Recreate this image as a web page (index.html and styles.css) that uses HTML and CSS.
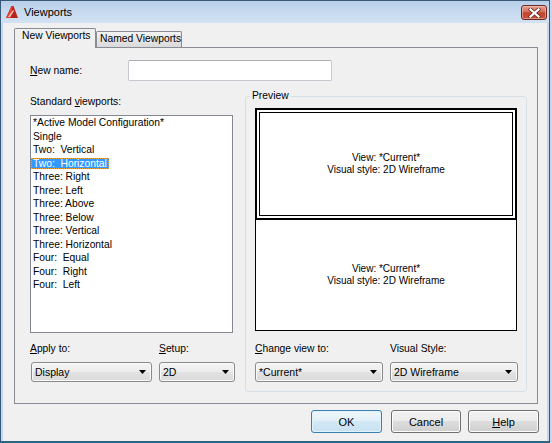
FILE: index.html
```html
<!DOCTYPE html>
<html>
<head>
<meta charset="utf-8">
<title>Viewports</title>
<link rel="stylesheet" href="styles.css">
</head>
<body>
<div class="window">
  <div class="titlebar">
    <svg class="app-icon" width="14" height="14" viewBox="0 0 14 14">
      <polygon points="1,13 6.5,1 8.5,1 13,13" fill="#b5231a"/>
      <polygon points="1,13 6.5,1 7.5,1 6,13" fill="#e2412f"/>
      <polygon points="3,12 8,5 9,6 5,12" fill="#f4c7bf"/>
    </svg>
    <span class="title">Viewports</span>
    <div class="close-btn">
      <svg width="13" height="10" viewBox="0 0 13 10">
        <path d="M2.5 1.5L10.5 8.5M10.5 1.5L2.5 8.5" stroke="#6d3128" stroke-width="3.8" stroke-linecap="square"/>
        <path d="M2.5 1.5L10.5 8.5M10.5 1.5L2.5 8.5" stroke="#ffffff" stroke-width="2.2" stroke-linecap="square"/>
      </svg>
    </div>
  </div>
  <div class="client">
    <div class="tabs">
      <div class="tab active">New Viewports</div>
      <div class="tab">Named Viewports</div>
    </div>
    <div class="panel">
      <div class="name-row">
        <div class="name-label"><u>N</u>ew name:</div>
        <div class="textbox"></div>
      </div>
      <div class="main-grid">
        <div class="left-col">
          <div class="label">Standard <u>v</u>iewports:</div>
          <div class="listbox">
            <div class="item"><span>*Active Model Configuration*</span></div>
            <div class="item"><span>Single</span></div>
            <div class="item"><span>Two:  Vertical</span></div>
            <div class="item"><span class="selected">Two:  Horizontal</span></div>
            <div class="item"><span>Three: Right</span></div>
            <div class="item"><span>Three: Left</span></div>
            <div class="item"><span>Three: Above</span></div>
            <div class="item"><span>Three: Below</span></div>
            <div class="item"><span>Three: Vertical</span></div>
            <div class="item"><span>Three: Horizontal</span></div>
            <div class="item"><span>Four:  Equal</span></div>
            <div class="item"><span>Four:  Right</span></div>
            <div class="item"><span>Four:  Left</span></div>
          </div>
          <div class="combo-row">
            <div class="field f-apply">
              <div class="label"><u>A</u>pply to:</div>
              <div class="combo"><span>Display</span><svg class="arrow" width="7" height="4" viewBox="0 0 7 4"><path d="M0 0H7L3.5 4Z"/></svg></div>
            </div>
            <div class="field f-setup">
              <div class="label"><u>S</u>etup:</div>
              <div class="combo"><span>2D</span><svg class="arrow" width="7" height="4" viewBox="0 0 7 4"><path d="M0 0H7L3.5 4Z"/></svg></div>
            </div>
          </div>
        </div>
        <fieldset class="preview-group">
          <legend>Preview</legend>
          <div class="preview-body">
            <div class="preview">
              <div class="pane pane-top">
                <div class="pane-inner">
                  <span>View: *Current*</span>
                  <span>Visual style: 2D Wireframe</span>
                </div>
              </div>
              <div class="pane pane-bottom">
                <span>View: *Current*</span>
                <span>Visual style: 2D Wireframe</span>
              </div>
            </div>
            <div class="combo-row">
              <div class="field f-view">
                <div class="label"><u>C</u>hange view to:</div>
                <div class="combo"><span>*Current*</span><svg class="arrow" width="7" height="4" viewBox="0 0 7 4"><path d="M0 0H7L3.5 4Z"/></svg></div>
              </div>
              <div class="field f-style">
                <div class="label">Visual Style:</div>
                <div class="combo"><span>2D Wireframe</span><svg class="arrow" width="7" height="4" viewBox="0 0 7 4"><path d="M0 0H7L3.5 4Z"/></svg></div>
              </div>
            </div>
          </div>
        </fieldset>
      </div>
    </div>
    <div class="buttons">
      <div class="btn default">OK</div>
      <div class="btn btn-cancel">Cancel</div>
      <div class="btn btn-help"><u>H</u>elp</div>
    </div>
  </div>
</div>
</body>
</html>
```

FILE: styles.css
```css
* { box-sizing: border-box; }
html, body { margin: 0; padding: 0; }
body {
  width: 552px;
  height: 443px;
  overflow: hidden;
  background: #c4d7ec;
  font-family: "Liberation Sans", Arial, sans-serif;
  font-size: 10.3px;
  color: #000;
}
.window {
  width: 550px;
  height: 443px;
  border: 1px solid #3a5877;
  border-bottom: 2px solid #2f6583;
  background: #c4d7ec;
  display: flex;
  flex-direction: column;
}
.titlebar {
  height: 22px;
  flex: none;
  display: flex;
  align-items: center;
  padding: 0 2px 0 4px;
  background: linear-gradient(#b7cee8, #c6d9ef 45%, #d2e2f3);
}
.app-icon { flex: none; margin-right: 5px; }
.title { flex: 1; font-size: 11px; line-height: 13px; color: #000; }
.close-btn {
  flex: none;
  width: 26px;
  height: 15px;
  margin-top: 1px;
  border: 1px solid #6b2a22;
  border-radius: 3px;
  background: linear-gradient(#e3a091, #d3705c 45%, #c4432d 52%, #c9553d);
  box-shadow: inset 0 0 0 1px rgba(255, 220, 210, 0.45);
  display: flex;
  align-items: center;
  justify-content: center;
}
.client {
  flex: 1;
  margin: 0 2px;
  background: #f0f0f0;
  display: flex;
  flex-direction: column;
}
.tabs {
  flex: none;
  height: 19px;
  margin: 5px 0 0 11px;
  display: flex;
  align-items: flex-end;
}
.tab {
  height: 16px;
  border: 1px solid #898c95;
  border-bottom: none;
  border-radius: 2px 2px 0 0;
  background: linear-gradient(#f3f3f3, #e6e6e6 50%, #dadada);
  padding: 0 0 0 3px;
  line-height: 13px;
  width: 86px;
  white-space: nowrap;
}
.tab.active {
  position: relative;
  z-index: 1;
  width: 82px;
  height: 20px;
  margin-bottom: -1px;
  padding-left: 7px;
  line-height: 14px;
  background: #f0f0f0;
}
.panel {
  flex: none;
  width: 524px;
  height: 357px;
  margin-left: 11px;
  border: 1px solid #898c95;
  background: #f0f0f0;
  padding-left: 15px;
}
.name-row {
  display: flex;
  align-items: center;
  margin-top: 12px;
  height: 21px;
}
.name-label { width: 98px; line-height: 12px; }
.textbox {
  width: 204px;
  height: 21px;
  background: #fff;
  border: 1px solid #c5c8ce;
  border-top-color: #abadb3;
  border-radius: 2px;
}
.main-grid {
  display: grid;
  grid-template-columns: 203px 282px;
  column-gap: 12px;
  align-items: start;
  margin-top: 9px;
}
.left-col {
  padding-top: 6px;
  display: flex;
  flex-direction: column;
}
.label { line-height: 12px; white-space: nowrap; }
.listbox {
  margin-top: 7px;
  height: 218px;
  background: #fff;
  border: 1px solid #828790;
}
.item { line-height: 13.5px; height: 13.5px; white-space: pre; }
.item span { padding: 0 2px; }
.item .selected {
  background: #3399ff;
  color: #fff;
  outline: 1px dotted #e8a23a;
  outline-offset: -1px;
}
.combo-row { display: flex; margin-top: 10px; }
.field { display: flex; flex-direction: column; flex: none; }
.combo {
  margin-top: 7px;
  height: 20px;
  border: 1px solid #8a8a8a;
  border-radius: 3px;
  background: linear-gradient(#f4f4f4, #ececec 50%, #e2e2e2 50%, #dadada);
  box-shadow: inset 0 0 0 1px #fbfbfb;
  display: flex;
  align-items: center;
  padding: 0 5px 0 3px;
  font-size: 10.5px;
  white-space: nowrap;
}
.combo span { flex: 1; }
.arrow { flex: none; fill: #000; }
.f-apply { width: 122px; }
.f-apply .combo { margin-left: 1px; width: 121px; }
.f-setup { margin-left: 7px; width: 76px; }
.preview-group {
  margin: 0;
  padding: 0;
  min-width: 0;
  width: 282px;
  border: 1px solid #d5dfe5;
  border-radius: 3px;
}
.preview-group legend {
  margin-left: 4px;
  padding: 0 2px;
  line-height: 12px;
  font-size: 10.3px;
}
.preview-body { padding: 6px 9px 9px 9px; }
.preview {
  width: 262px;
  height: 223px;
  display: flex;
  flex-direction: column;
  background: #fff;
}
.pane {
  display: flex;
  flex-direction: column;
  align-items: center;
  justify-content: center;
  font-size: 10px;
  line-height: 12px;
  text-align: center;
}
.pane-top {
  height: 112px;
  border: 2px solid #000;
  padding: 2px;
  align-items: stretch;
}
.pane-inner {
  flex: 1;
  border: 1px solid #000;
  display: flex;
  flex-direction: column;
  align-items: center;
  justify-content: center;
}
.pane-bottom {
  height: 111px;
  border: 1px solid #000;
  border-top: none;
}
.preview-body .combo-row { margin-top: 12px; }
.f-view { width: 128px; }
.f-style { width: 128px; margin-left: 7px; }
.buttons {
  flex: none;
  display: flex;
  justify-content: flex-end;
  margin-top: 6px;
  padding-right: 8px;
}
.btn {
  width: 71px;
  height: 23px;
  border: 1px solid #707070;
  border-radius: 3px;
  background: linear-gradient(#f2f2f2, #ebebeb 50%, #dddddd 50%, #cfcfcf);
  box-shadow: inset 0 0 0 1px #fcfcfc;
  font-size: 11px;
  display: flex;
  align-items: center;
  justify-content: center;
}
.btn.default {
  border-color: #3c7fb1;
  background: linear-gradient(#eef6fb, #e1eff8 50%, #d2e8f5 50%, #c8e1f1);
  box-shadow: inset 0 0 0 1px #e0f2fc;
}
.btn-cancel { width: 70px; margin-left: 9px; }
.btn-help { margin-left: 7px; }
```
